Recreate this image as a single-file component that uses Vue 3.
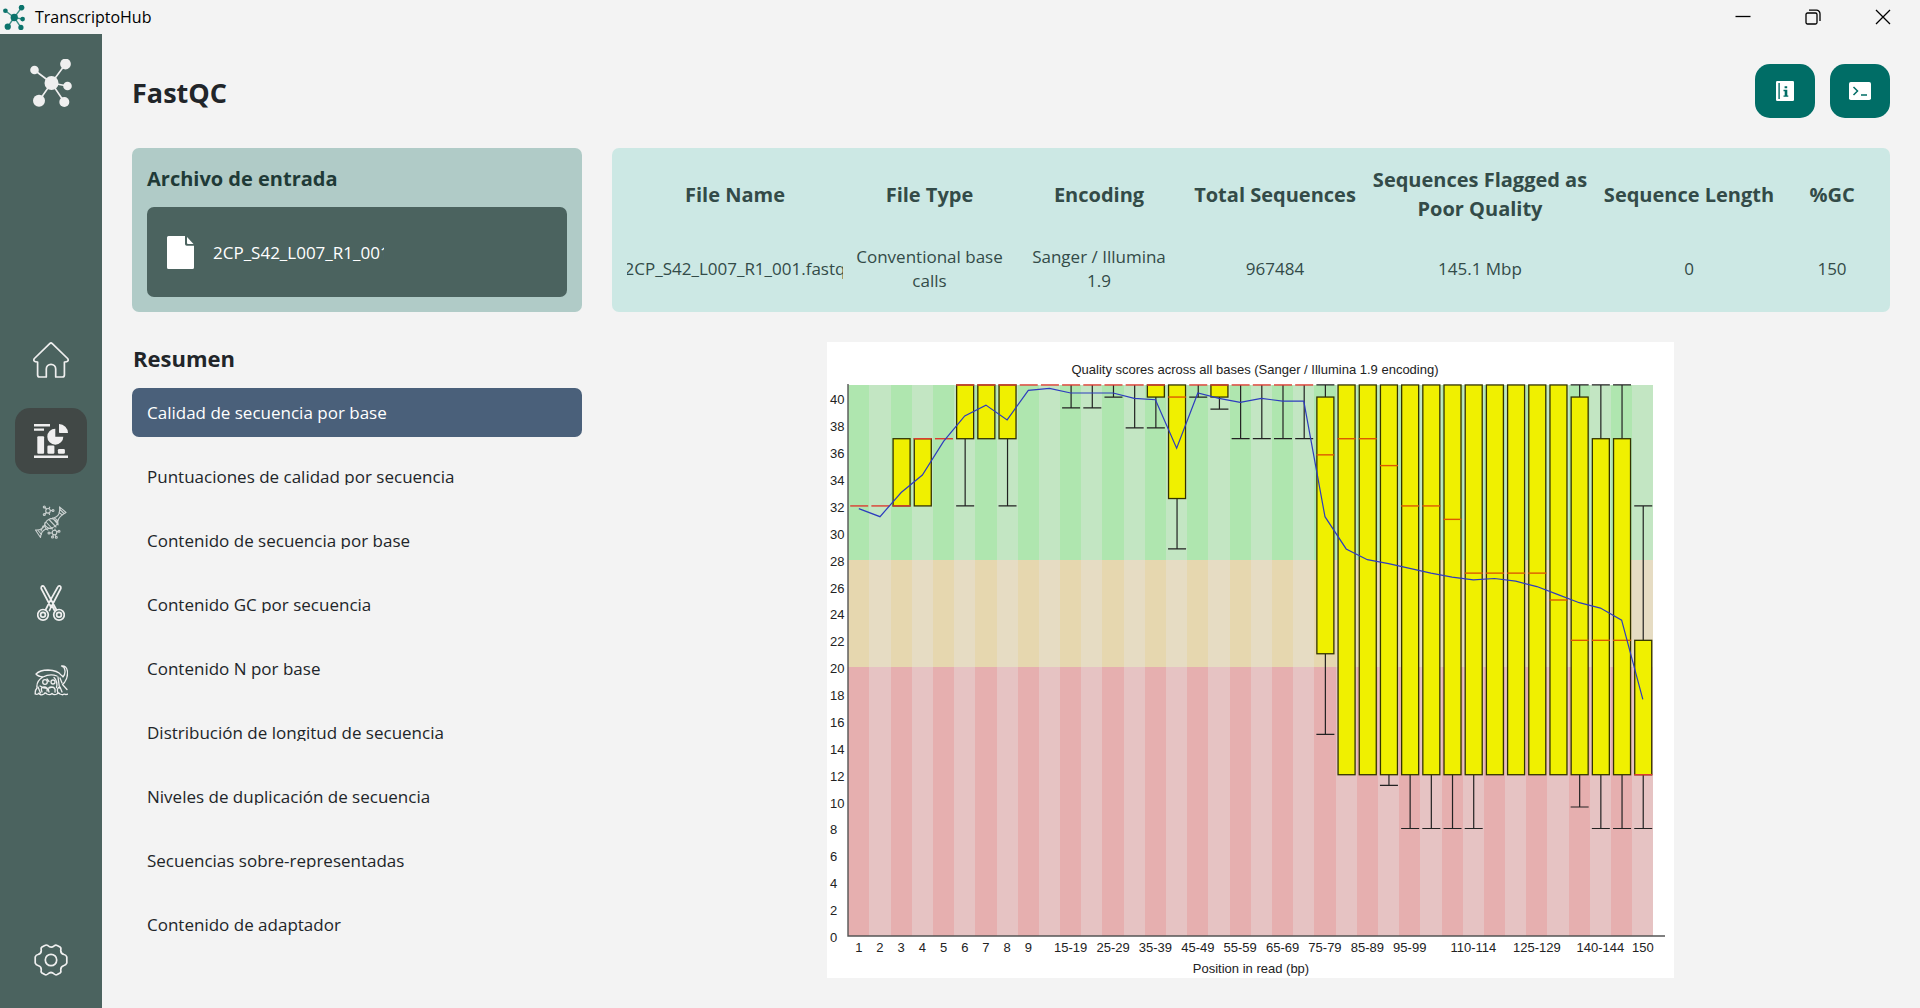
<script setup>
import { ref } from 'vue'

const activeReport = ref(0)
const reports = [
  { label: 'Calidad de secuencia por base', tight: false },
  { label: 'Puntuaciones de calidad por secuencia', tight: true },
  { label: 'Contenido de secuencia por base', tight: true },
  { label: 'Contenido GC por secuencia', tight: true },
  { label: 'Contenido N por base', tight: false },
  { label: 'Distribución de longitud de secuencia', tight: true },
  { label: 'Niveles de duplicación de secuencia', tight: true },
  { label: 'Secuencias sobre-representadas', tight: true },
  { label: 'Contenido de adaptador', tight: false },
]

const columns = [
  { title: 'File Name', value: '2CP_S42_L007_R1_001.fastq', width: 216 },
  { title: 'File Type', value: 'Conventional base calls', width: 173 },
  { title: 'Encoding', value: 'Sanger / Illumina 1.9', width: 166 },
  { title: 'Total Sequences', value: '967484', width: 186 },
  { title: 'Sequences Flagged as Poor Quality', value: '145.1 Mbp', width: 224 },
  { title: 'Sequence Length', value: '0', width: 194 },
  { title: '%GC', value: '150', width: 92 },
]

/* Box plot geometry */
const left = 21.2
const step = 21.19
const bottom = 594
const unit = 13.44
const y = (v) => bottom - unit * v
const colX = (i) => left + step * i

/* [lower whisker, lower quartile, median, upper quartile, upper whisker, mean] */
const stats = [
  [32, 32, 32, 32, 32, 31.8],
  [32, 32, 32, 32, 32, 31.2],
  [32, 32, 32, 37, 37, 33],
  [32, 32, 37, 37, 37, 34.3],
  [37, 37, 37, 37, 37, 36.8],
  [32, 37, 41, 41, 41, 38.7],
  [37, 37, 41, 41, 41, 39.5],
  [32, 37, 41, 41, 41, 38.4],
  [41, 41, 41, 41, 41, 40.6],
  [41, 41, 41, 41, 41, 40.75],
  [39.3, 41, 41, 41, 41, 40.4],
  [39.3, 41, 41, 41, 41, 40.4],
  [40.1, 41, 41, 41, 41, 40.4],
  [37.8, 41, 41, 41, 41, 40],
  [37.8, 40.1, 41, 41, 41, 39.9],
  [28.8, 32.55, 40.1, 41, 41, 36.3],
  [40.1, 41, 41, 41, 41, 40.4],
  [39.2, 40.1, 41, 41, 41, 40],
  [37, 41, 41, 41, 41, 39.7],
  [37, 41, 41, 41, 41, 40],
  [37, 41, 41, 41, 41, 39.8],
  [37, 41, 41, 41, 41, 39.8],
  [15, 21, 35.8, 40.1, 41, 31.2],
  [12, 12, 37, 41, 41, 28.8],
  [12, 12, 37, 41, 41, 28],
  [11.2, 12, 35, 41, 41, 27.7],
  [8, 12, 32, 41, 41, 27.35],
  [8, 12, 32, 41, 41, 27],
  [8, 12, 31, 41, 41, 26.7],
  [8, 12, 27, 41, 41, 26.5],
  [12, 12, 27, 41, 41, 26.6],
  [12, 12, 27, 41, 41, 26.4],
  [12, 12, 27, 41, 41, 26],
  [12, 12, 25, 41, 41, 25.4],
  [9.6, 12, 22, 40.1, 41, 24.8],
  [8, 12, 22, 37, 41, 24.4],
  [8, 12, 22, 37, 41, 23.5],
  [8, 12, 12, 22, 32, 17.6],
]

const zones = [
  { name: 'good', top: 41, base: 28 },
  { name: 'fair', top: 28, base: 20 },
  { name: 'poor', top: 20, base: 0 },
]

const yTicks = Array.from({ length: 21 }, (_, i) => i * 2)
const xTicks = [
  [0, '1'], [1, '2'], [2, '3'], [3, '4'], [4, '5'], [5, '6'], [6, '7'], [7, '8'], [8, '9'],
  [10, '15-19'], [12, '25-29'], [14, '35-39'], [16, '45-49'], [18, '55-59'], [20, '65-69'],
  [22, '75-79'], [24, '85-89'], [26, '95-99'], [29, '110-114'], [32, '125-129'],
  [35, '140-144'], [37, '150'],
]
const meanLine = stats.map((s, i) => `${colX(i + 0.5)},${y(s[5])}`).join(' ')
</script>

<template>
  <div class="app">
    <header class="titlebar">
      <svg class="titlebar-logo" viewBox="30 58 42 48" aria-hidden="true">
        <path d="M51.5 82 65.5 63M51.5 82 34.3 69M51.5 82l16 3M51.5 82 39 99.700M51.5 82l12.800 19" stroke="#3f8f88" stroke-width="2.600" />
        <g fill="#0b736c">
          <circle cx="51.5" cy="82" r="7" /><circle cx="65.5" cy="63" r="5.400" /><circle cx="34.5" cy="69" r="4.500" />
          <circle cx="67.500" cy="85" r="4.500" /><circle cx="39" cy="99.700" r="6" /><circle cx="64.300" cy="101" r="5" />
        </g>
      </svg>
      <span class="titlebar-name">TranscriptoHub</span>
      <div class="window-controls">
        <button type="button" aria-label="Minimizar">
          <svg width="16" height="16" viewBox="0 0 16 16"><path d="M.5 7.500h15" /></svg>
        </button>
        <button type="button" aria-label="Restaurar">
          <svg width="16" height="16" viewBox="0 0 16 16">
            <rect x="1" y="4" width="11" height="11" rx="1.500" /><path d="M4 1.200h7.500a3.500 3.500 0 0 1 3.500 3.500v7.300" />
          </svg>
        </button>
        <button type="button" aria-label="Cerrar">
          <svg width="16" height="16" viewBox="0 0 16 16"><path d="M1 1l14 14M15 1 1 15" /></svg>
        </button>
      </div>
    </header>

    <div class="body">
      <aside class="sidebar">
        <div class="brand">
          <svg width="42" height="48" viewBox="30 58 42 48" aria-hidden="true">
            <path d="M51.5 82 65.5 63M51.5 82 34.3 69M51.5 82l16 3M51.5 82 39 99.700M51.5 82l12.800 19" stroke="#efefef" stroke-width="1.600" />
            <g fill="#efefef">
              <circle cx="51.5" cy="82" r="7" /><circle cx="65.5" cy="63" r="5.400" /><circle cx="34.5" cy="69" r="4.300" />
              <circle cx="67.500" cy="85" r="4.300" /><circle cx="39" cy="99.700" r="6" /><circle cx="64.300" cy="101" r="5" />
            </g>
          </svg>
        </div>

        <nav class="nav">
          <button type="button" class="nav-item" aria-label="Inicio">
            <svg width="36" height="36" viewBox="0 0 36 36" class="line">
              <path d="M16.700 1.600 1.400 16.500Q.3 18 1.200 19 2 20 4.600 20v13q0 2 2 2h6.700v-8a4.700 4.700 0 0 1 9.400 0v8h6.700q2 0 2-2V20q2.600 0 3.400-1 .9-1-.2-2.500L19.300 1.600q-1.300-1.200-2.600 0z" />
            </svg>
          </button>
          <button type="button" class="nav-item active" aria-label="Control de calidad">
            <svg width="34" height="34" viewBox="0 0 34 34" fill="#efefef">
              <path d="M0 0h16v2.400H0zM0 4.400h10v2.400H0zM0 31.500h34v2.500H0z" />
              <rect x="3.300" y="12.300" width="6.800" height="17.400" rx="1" />
              <rect x="13.400" y="21.600" width="7" height="8.100" rx="1.200" />
              <rect x="23.900" y="25" width="7" height="4.700" rx="1.200" />
              <path d="M21.300 4.700v8h8a8 8 0 1 1-8-8zM25 0a9 9 0 0 1 9 9h-8.200a.8.8 0 0 1-.8-.8z" />
            </svg>
          </button>
          <button type="button" class="nav-item" aria-label="Secuencias">
            <svg width="34" height="34" viewBox="0 0 34 34" class="line soft">
              <path d="M1.500 25q7 .5 9-5 1.500-5.500 7-6.500 6-1 7.500-5 1-3 .5-6.700M6.500 32.500q.5-6 4.500-8 3-1 6-1.500 6-1 7-7 .5-4.500 8-8.500M1.500 25l5 7.500M25.500 1.800 32 7.500M11 17.500q-1 6 3 7.500M20 13q4.500 1.500 4 7M9 21l-2 5M12.500 17.500l6 6.500M15 14.500l7 7.500M18.500 13l5 6M25 7.500l3.500 2.500M26 4.500l4 4M4 25.500l3.500 4M10.500 19q3 5.500 8 4.500M16 13.500q7 .5 7.500 6" />
              <g><circle cx="14" cy="5.800" r="2.300" /><path d="M12.500 4 11 2.500M16.500 5.500H18M12.500 7.500 11 9M15 8l.5 1.500M15 3.500l.7-1.300" />
                <circle cx="10.300" cy="2" r="1" /><circle cx="19" cy="5.500" r="1" /><circle cx="10.300" cy="9.500" r="1" />
                <circle cx="20.500" cy="27.500" r="2.300" /><path d="M18.500 28H16M22.500 27l1.500-.5M21 30l1 1.500M19.500 29.500l-.7 1.500M21 25v-1" />
                <circle cx="15" cy="28" r="1" /><circle cx="25" cy="26.300" r="1" /><circle cx="22.300" cy="32.300" r="1" /><circle cx="18.500" cy="32" r="1" /></g>
            </svg>
          </button>
          <button type="button" class="nav-item" aria-label="Recortar">
            <svg width="28" height="36" viewBox="0 0 28 36" class="line">
              <path d="M13.200 20.500 4.200 3.500Q4 .8 6 .9q1 .2 1.500 1.600L19.500 25M14.500 21l-2 4.500M14 14.200 20.500 2.500Q21.200.8 22.500.9q1.700.2 1.300 2.600L15 20.500l2.500 5M14 14.200 8.500 25" />
              <circle cx="6" cy="29.800" r="5.300" /><circle cx="6" cy="29.800" r="2.400" />
              <circle cx="22" cy="29.800" r="5.300" /><circle cx="22" cy="29.800" r="2.400" />
              <circle cx="14" cy="21.500" r=".6" />
            </svg>
          </button>
          <button type="button" class="nav-item" aria-label="Ensamblar">
            <svg width="34" height="38" viewBox="0 0 34 38" class="line fine">
              <path d="M2 9q4-4 12-4 10 .5 13 5 1.500 1 2 2 3.500-4 1-9.500L27.500 1q5-.5 6 5.500.5 6-3 11l-2 2 4.500 5M2 9q2 2.500 7 3 7-3.500 14-1M9 12Q2 16 3 23q-2.500 3-1.500 6M1 29q3 1 4-1 1 3 5 1 1-2 3 0 3 1.500 5-.5 2 2 5 .5 1-2 3 0 3 1.500 4 0 2 1 4 0" />
              <circle cx="11" cy="17" r="2.300" /><circle cx="19" cy="17" r="2" /><path d="M6 21q6 4 11 1.500M13 14l2 2.500M20 12.500q4 4 2.500 10M24 12l1.500 11M8 27q-2-5 2-5 4 0 3 4M15 27q-2-5 2-5 5 0 4 5M24 28q-2-5 2-6l2 5M4 22l2.500 6M26 13l2 5" />
            </svg>
          </button>
        </nav>

        <button type="button" class="nav-item" aria-label="Ajustes">
          <svg width="34" height="32" viewBox="0 0 34 32" class="line">
            <path d="M13.800 1.500q-1.500-1-3 0L8 3q-1.300 1-.8 2.800Q7.700 9.500 4 10.500 2 10.800 1.200 13v6q.8 2 2.800 2.500 3.700 1 3.200 4.700Q6.700 28 8 29l2.800 1.600q1.500.8 3-.6 3.200-3 6.400 0 1.500 1.400 3 .6L26 29q1.300-1 .8-2.800-.5-3.700 3.200-4.700 2-.5 2.800-2.500v-6q-.8-2.200-2.800-2.500-3.700-1-3.200-4.700Q27.300 4 26 3l-2.800-1.500q-1.500-1-3 .3-3.200 2.800-6.400-.3z" />
            <circle cx="17" cy="16" r="5.700" />
          </svg>
        </button>
      </aside>

      <main class="main">
        <div class="page-head">
          <h1>FastQC</h1>
          <div class="actions">
            <button type="button" aria-label="Información">
              <svg width="18" height="20" viewBox="0 0 18 20">
                <rect width="18" height="20" rx="1.200" fill="#fff" />
                <path d="M3.100 2v16" stroke="#006d66" stroke-width="1.400" />
                <path d="M8.600 5.200h2.600v2H8.600zM7.500 8.800h3.800v5.600h1v1.400H7.500v-1.400h1.200v-4.200H7.500z" fill="#006d66" />
              </svg>
            </button>
            <button type="button" aria-label="Consola">
              <svg width="22" height="18" viewBox="0 0 22 18">
                <rect width="22" height="18" rx="1.800" fill="#fff" />
                <path d="M4.500 5l4 4-4 4M12 13h6" fill="none" stroke="#006d66" stroke-width="1.500" />
              </svg>
            </button>
          </div>
        </div>

        <div class="layout">
          <section class="input-card">
            <h2>Archivo de entrada</h2>
            <div class="file">
              <svg width="27" height="33" viewBox="0 0 27 33" aria-hidden="true">
                <path d="M1.500 0H18v8q0 1.800 1.800 1.800H27v21.700q0 1.500-1.500 1.500h-24Q0 33 0 31.500v-30Q0 0 1.500 0z" fill="#fff" />
                <path d="M20 1v6q0 1 1 1h5.500z" fill="#fff" />
              </svg>
              <span class="file-name">2CP_S42_L007_R1_001.fastq</span>
            </div>
          </section>

          <section class="stats-card">
            <table>
              <colgroup>
                <col v-for="c in columns" :key="c.title" :style="{ width: c.width + 'px' }" />
              </colgroup>
              <thead>
                <tr><th v-for="c in columns" :key="c.title" scope="col">{{ c.title }}</th></tr>
              </thead>
              <tbody>
                <tr>
                  <td v-for="c in columns" :key="c.title"><div class="cell">{{ c.value }}</div></td>
                </tr>
              </tbody>
            </table>
          </section>

          <section class="summary">
            <h2>Resumen</h2>
            <div class="report-list">
              <button
                v-for="(r, i) in reports"
                :key="r.label"
                type="button"
                class="report"
                :class="{ selected: i === activeReport, tight: r.tight }"
                @click="activeReport = i"
              >
                <span>{{ r.label }}</span>
              </button>
            </div>
          </section>

          <svg class="chart" viewBox="0 0 848 636" role="img" aria-label="Quality scores across all bases">
            <rect width="847" height="636" fill="#fff" />
            <text x="428" y="32" text-anchor="middle">Quality scores across all bases (Sanger / Illumina 1.9 encoding)</text>
            <g v-for="z in zones" :key="z.name" shape-rendering="crispEdges">
              <rect
                v-for="(s, i) in stats"
                :key="i"
                :class="[z.name, { dark: i % 2 === 0 }]"
                :x="colX(i)"
                :y="y(z.top)"
                :width="step"
                :height="y(z.base) - y(z.top)"
              />
            </g>
            <path class="axis" d="M21 42v552h817" />
            <text v-for="t in yTicks" :key="'y' + t" x="3" :y="y(t) + 6">{{ t }}</text>
            <text v-for="t in xTicks" :key="'x' + t[0]" :x="colX(t[0] + 0.5)" y="610" text-anchor="middle">{{ t[1] }}</text>
            <text x="424" y="631" text-anchor="middle">Position in read (bp)</text>
            <g v-for="(s, i) in stats" :key="'b' + i">
              <path
                v-if="s[0] < s[1]"
                class="whisker"
                :d="`M${colX(i) + 11} ${y(s[1])}V${y(s[0])}M${colX(i) + 2} ${y(s[0])}h18`"
              />
              <path
                v-if="s[4] > s[3]"
                class="whisker"
                :d="`M${colX(i) + 11} ${y(s[3])}V${y(s[4])}M${colX(i) + 2} ${y(s[4])}h18`"
              />
              <rect v-if="s[3] > s[1]" class="box" :x="colX(i) + 2.500" :y="y(s[3])" width="17" :height="y(s[1]) - y(s[3])" />
              <path class="median" :class="{ inside: s[2] > s[1] && s[2] < s[3] }" :d="`M${colX(i) + 2} ${y(s[2])}h18`" />
            </g>
            <polyline class="mean" :points="meanLine" />
          </svg>
        </div>
      </main>
    </div>
  </div>
</template>

<style>
body {
  margin: 0;
  background: #f3f3f3;
}
</style>

<style scoped>
* {
  box-sizing: border-box;
}

.app {
  display: flex;
  flex-direction: column;
  height: 100vh;
  min-height: 800px;
  background: #f3f3f3;
  color: #212529;
  font-family: 'Open Sans', 'Noto Sans', sans-serif;
  font-size: 17px;
}

button {
  border: 0;
  padding: 0;
  background: none;
  color: inherit;
  font: inherit;
  cursor: pointer;
}

h1,
h2 {
  margin: 0;
  font-weight: 700;
}

.titlebar {
  display: flex;
  align-items: center;
  height: 34px;
  padding: 0 2px 0 3px;
  color: #000;
  font-size: 16px;
}

.titlebar-logo {
  width: 22px;
  height: 25px;
  margin-right: 10px;
}

.window-controls {
  display: flex;
  margin-left: auto;
}

.window-controls button {
  display: flex;
  align-items: center;
  justify-content: center;
  width: 70px;
  height: 34px;
}

.window-controls svg {
  fill: none;
  stroke: #000;
  stroke-width: 1.3;
}

.body {
  display: flex;
  flex: 1;
  min-height: 0;
}

.sidebar {
  display: flex;
  flex-direction: column;
  align-items: center;
  justify-content: space-between;
  flex: none;
  width: 102px;
  padding: 16px 0 15px;
  background: #4b635f;
}

.brand,
.nav-item {
  display: flex;
  align-items: center;
  justify-content: center;
  width: 72px;
  height: 66px;
}

.nav {
  display: flex;
  flex-direction: column;
  gap: 15px;
}

.nav-item {
  border-radius: 15px;
}

.nav-item.active {
  background: #414846;
}

.line {
  fill: none;
  stroke: #efefef;
  stroke-width: 1.7;
  stroke-linejoin: round;
  stroke-linecap: round;
}

.line.soft {
  stroke: #c9d0cf;
  stroke-width: 1.1;
}

.line.fine {
  stroke-width: 1.3;
}

.main {
  display: flex;
  flex-direction: column;
  gap: 30px;
  flex: 1;
  min-width: 0;
  padding: 30px;
}

.page-head {
  display: flex;
  align-items: center;
  justify-content: space-between;
  height: 54px;
}

h1 {
  padding-top: 2px;
  font-size: 27px;
}

.actions {
  display: flex;
  gap: 15px;
}

.actions button {
  display: flex;
  align-items: center;
  justify-content: center;
  width: 60px;
  height: 54px;
  border-radius: 15px;
  background: #006d66;
}

.layout {
  display: grid;
  grid-template-columns: 450px minmax(0, 1fr);
  grid-template-rows: auto minmax(0, 1fr);
  gap: 30px;
  flex: 1;
  min-height: 0;
}

.input-card,
.stats-card {
  padding: 15px;
  border-radius: 7px;
}

.input-card {
  background: #b0cbc7;
}

.input-card h2 {
  padding-top: 1px;
  margin-bottom: 14px;
  color: #1f3a37;
  font-size: 20px;
  line-height: 29px;
}

.file {
  display: flex;
  align-items: center;
  gap: 19px;
  height: 90px;
  padding: 0 20px;
  border-radius: 7px;
  background: #4b635f;
  color: #fff;
}

.file-name {
  width: 171px;
  overflow: hidden;
  white-space: nowrap;
}

.stats-card {
  padding-right: 12px;
  background: #cce8e4;
  color: #334b48;
}

table {
  width: 100%;
  height: 100%;
  table-layout: fixed;
  border-collapse: collapse;
  text-align: center;
}

th {
  height: 76px;
  padding: 1px 0 15px;
  font-size: 20px;
  line-height: 29px;
}

td {
  padding: 2px 0 0;
  line-height: 24px;
}

.cell {
  display: flex;
  justify-content: center;
  overflow: hidden;
  padding: 0 12px;
}

td:first-child .cell {
  padding: 0;
}

.summary {
  display: flex;
  flex-direction: column;
  gap: 15px;
  padding-bottom: 30px;
}

.summary h2 {
  padding: 1px 0 0 1px;
  font-size: 22px;
  line-height: 30px;
}

.report-list {
  display: flex;
  flex-direction: column;
  gap: 15px;
  flex: 1;
}

.report {
  display: flex;
  align-items: center;
  flex: 1;
  padding: 2px 15px 0;
  border-radius: 7px;
  text-align: left;
}

.report span {
  line-height: 24px;
}

.report.tight span {
  height: 20px;
  margin-bottom: 4px;
  overflow: hidden;
}

.report.selected {
  background: #4a607a;
  color: #fff;
}

.chart {
  width: 100%;
  height: 100%;
  min-height: 0;
  font-family: 'Liberation Sans', Arial, sans-serif;
  font-size: 13px;
  fill: #222;
}

.good { fill: #c3e6c3; }
.good.dark { fill: #afe6af; }
.fair { fill: #e6dcc3; }
.fair.dark { fill: #e6d7af; }
.poor { fill: #e6c3c3; }
.poor.dark { fill: #e6afaf; }

.axis {
  fill: none;
  stroke: #555;
  stroke-width: 1.4;
}

.whisker {
  fill: none;
  stroke: #222;
  stroke-width: 1.2;
}

.box {
  fill: #f0f000;
  stroke: #333300;
  stroke-width: 1.3;
}

.median {
  stroke: #dc3c32;
  stroke-width: 1.4;
}

.median.inside {
  stroke: #dc5a00;
}

.mean {
  fill: none;
  stroke: #2d3cbe;
  stroke-width: 1.2;
}
</style>
